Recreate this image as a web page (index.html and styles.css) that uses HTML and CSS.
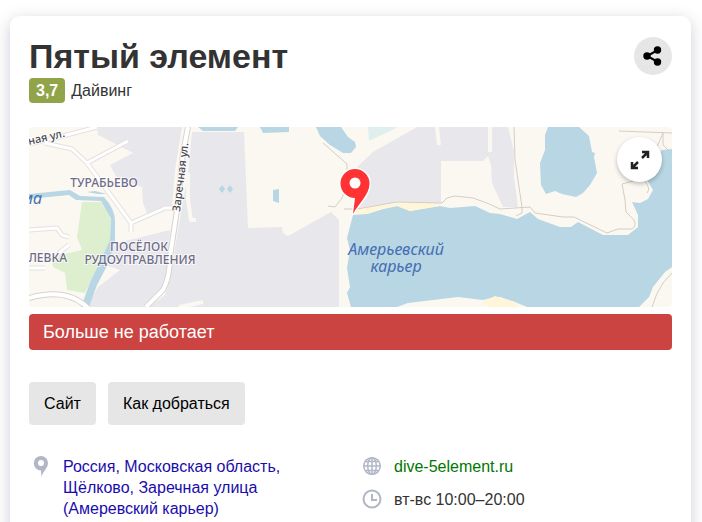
FILE: index.html
```html
<!DOCTYPE html>
<html lang="ru">

<head>
    <meta charset="UTF-8">
    <meta name="viewport" content="width=device-width, initial-scale=1.0">
    <title>Пятый элемент</title>
    <link rel="stylesheet" href="styles.css">
</head>

<body>

    <main class="card">
        <header class="card-header">
            <div>
                <h1 class="title">Пятый элемент</h1>
                <div class="subtitle">
                    <span class="rating">3,7</span>
                    <span>Дайвинг</span>
                </div>
            </div>
            <button type="button" class="share" aria-label="Поделиться">
                <svg width="20" height="20" viewBox="0 0 20 20">
                    <path d="M15 4L4 10l11 6" fill="none" stroke="#000" stroke-width="2" />
                    <circle cx="14.5" cy="4" r="3.7" />
                    <circle cx="4" cy="10" r="3.7" />
                    <circle cx="14.5" cy="16" r="3.7" />
                </svg>
            </button>
        </header>

        <div class="map">
            <svg class="map-view" viewBox="0 0 643 180" preserveAspectRatio="xMidYMid slice">
                <rect class="land" width="643" height="180" />

                <!-- built-up areas -->
                <g class="area">
                    <path d="M68 0H153L146 43L143 80L119 89L114 76L113 60L88 51L81 38L104 26L79 13L69 8Z" />
                    <path d="M88 116L141 103L138 156L118 180H58L69 160L91 143L71 136Z" />
                    <path d="M163 5H215L219 101L253 100L254 106L259 109L302 85L310 93V180H120L136 168L141 153L149 103L153 80L159 48Z" />
                    <path d="M388 0H479L485 24V50L489 80H474L463 56L462 38L459 29L454 34H412V76L368 75L324 82L328 40L344 25Z" />
                </g>
                <path class="gap" d="M408 0l2 18M461 0v25M159 46v27l3 20h5M150 180l24-5" />
                <path class="park" d="M53 75H72L78 85L82 93L81 116L71 136L56 166L38 163L36 146L24 140L22 130L53 123L48 110Z" />
                <path class="meadow" d="M339 0H369L340 14Z" />

                <!-- water -->
                <g class="water">
                    <path d="M0 67L41 63L51 69L75 70Q86 82 86 94L86 114L80 135L68 158L60 180H52L62 153L72 133L81 113L82 92L72 74L47 73L40 68L0 72ZM58 65l8-1 12 3-9 0z" />
                    <path d="M169 0H209L206 4H174ZM231 0H260V5L234 6Z" />
                    <path d="M287 0H312L319 10L326 15L327 20L322 26H314L301 18L291 9Z" />
                    <path d="M244 63L250 62V76L244 74ZM190 62l3-4 3 4-3 4zM198 62l3-4 3 4-3 4z" />
                    <path d="M519 0H550L560 9L563 25L566 26L565 30L568 46L561 58L554 66L547 70L533 67L526 64L517 67L512 58L511 36L516 23V8Z" />
                    <path d="M324 88L338 87L354 82L368 79L381 84L411 79L421 81L446 79L461 86L471 87L488 92L501 85L509 92L531 100H542L549 95L574 108H599L609 100V88L603 75L611 76L619 72L624 63L618 53L621 36L626 30L633 23L643 22V140L636 145L624 160L620 170L610 180H498L486 175L471 170L466 170L454 173L429 170L379 176L368 180H322L318 166L321 160L318 141L321 123L318 111Z" />
                </g>
                <path class="sand" d="M328 87L324 82L368 76H412L411 79L381 84L368 79L354 82L338 87ZM453 175L466 169L486 175L490 180H460Z" />

                <!-- paths and roads -->
                <path class="trail" d="M294 16L318 37V56L313 71L306 80L299 79M315 82H328L368 75L413 76L418 71L426 69L444 71L458 76L471 82L501 80L506 86L534 90H545L578 106L589 102H603Q608 98 605 93L597 85L596 73L593 57L608 53M485 0L486 33L493 80V86L487 89M590 4L643 6M634 6L628 20M634 6V18L640 24M616 54Q622 62 618 66M643 146L634 156Q627 166 623 180" />
                <path class="road-edge" d="M16 16L43 22L58 36L102 96V105M58 36L99 14M102 96L136 81H145M0 17L30 10L68 0M0 103L28 101L33 108L40 110M40 118L31 125L27 131M16 141H0" />
                <path class="road" d="M16 16L43 22L58 36L102 96V105M58 36L99 14M102 96L136 81H145M0 17L30 10L68 0M0 103L28 101L33 108L40 110M40 118L31 125L27 131M16 141H0" />
                <path class="road-edge wide" d="M159 0L154 26L148 83L141 130Q141 150 134 163L117 180M0 171Q38 160 59 181" />
                <path class="road wide" d="M159 0L154 26L148 83L141 130Q141 150 134 163L117 180M0 171Q38 160 59 181" />

                <g class="place">
                    <text x="75" y="60">ТУРАБЬЕВО</text>
                    <text x="110" y="124">ПОСЁЛОК</text>
                    <text x="111" y="137">РУДОУПРАВЛЕНИЯ</text>
                    <text x="38" y="135" class="end">ЛЕВКА</text>
                </g>
                <g class="street">
                    <text transform="translate(0 18) rotate(-13)">ная ул.</text>
                    <text transform="translate(151 85) rotate(-83)">Заречная ул.</text>
                </g>
                <g class="water-name">
                    <text x="367" y="128">Амерьевский</text>
                    <text x="367" y="145">карьер</text>
                    <text x="13" y="77" class="end">ма</text>
                </g>

                <path class="marker" d="M326 42a14.500 14.500 0 0 1 14.500 14.500C340.500 68 329 77 324 87L326 71A14.500 14.500 0 0 1 326 42Z" />
                <circle cx="326" cy="56" r="5.500" fill="#fff" />
            </svg>
            <button type="button" class="expand" aria-label="Развернуть карту">
                <svg width="20" height="20" viewBox="0 0 20 20">
                    <path d="M12 2h6v6M18 2l-6 6M2 12v6h6M2 18l6-6" fill="none" stroke="#222" stroke-width="2.5" />
                </svg>
            </button>
        </div>

        <p class="closed">Больше не работает</p>

        <div class="actions">
            <button type="button" class="action">Сайт</button>
            <button type="button" class="action">Как добраться</button>
        </div>

        <div class="contacts">
            <div class="contact">
                <span class="contact-icon">
                    <svg width="16" height="22" viewBox="0 0 16 22">
                        <path fill="#b2b7c8" fill-rule="evenodd" d="M8 0a7 7 0 0 1 7 7c0 5-5 8-6.500 14L8 14.500A7.200 7.200 0 0 1 8 0zm0 4a3 3 0 1 0 0 6 3 3 0 0 0 0-6z" />
                    </svg>
                </span>
                <a href="#" class="address">Россия, Московская область, Щёлково, Заречная улица (Амеревский карьер)</a>
            </div>
            <div class="contact-list">
                <div class="contact">
                    <span class="contact-icon">
                        <svg width="20" height="20" viewBox="0 0 20 20" fill="none" stroke="#b2b7c8" stroke-width="1.5">
                            <circle cx="10" cy="10" r="8.3" />
                            <ellipse cx="10" cy="10" rx="4.3" ry="8.3" />
                            <path d="M10 1.500v17M1.500 10h17M3.500 5.500h13M3.500 14.500h13" />
                        </svg>
                    </span>
                    <a href="#" class="site">dive-5element.ru</a>
                </div>
                <div class="contact">
                    <span class="contact-icon">
                        <svg width="20" height="20" viewBox="0 0 20 20" fill="none" stroke="#b2b7c8" stroke-width="2">
                            <circle cx="10" cy="10" r="8.5" />
                            <path d="M10 5v6h5" />
                        </svg>
                    </span>
                    <span>вт-вс 10:00–20:00</span>
                </div>
            </div>
        </div>
    </main>

</body>

</html>
```
FILE: styles.css
```css
body {
    margin: 0;
    padding: 16px 11px 0 10px;
    background-color: #fff;
    color: #333;
    font-family: "Liberation Sans", Arial, sans-serif;
    font-size: 16px;
    line-height: 21px;
}

button {
    padding: 0;
    border: none;
    color: #000;
    font: inherit;
    cursor: pointer;
}

a {
    text-decoration: none;
}

svg {
    display: block;
}

.card {
    padding: 20px 19px;
    border-radius: 10px;
    background-color: #fff;
    box-shadow: 0 4px 16px rgba(50, 60, 90, 0.25);
}

.card-header {
    display: flex;
    justify-content: space-between;
    align-items: flex-start;
}

.title {
    margin: 0 0 2px;
    font-size: 34px;
    line-height: 40px;
}

.subtitle {
    display: flex;
    gap: 6px;
    line-height: 25px;
}

.rating {
    padding: 0 7px;
    border-radius: 4px;
    background-color: #91a449;
    color: #fff;
    font-weight: bold;
}

.share,
.expand {
    display: flex;
    align-items: center;
    justify-content: center;
    border-radius: 50%;
}

.share {
    width: 38px;
    height: 38px;
    margin-top: 1px;
    background-color: #e6e6e6;
}

.map {
    position: relative;
    margin-top: 24px;
    border-radius: 4px;
    overflow: hidden;
}

.map-view {
    width: 100%;
    height: 180px;
}

.expand {
    position: absolute;
    top: 10px;
    right: 10px;
    width: 45px;
    height: 45px;
    background-color: #fff;
    box-shadow: 0 2px 4px rgba(0, 0, 0, 0.25);
}

.land {
    fill: #fbf8f1;
}

.area {
    fill: #e8e7ec;
}

.park {
    fill: #deefd0;
}

.meadow {
    fill: #dfefed;
}

.water {
    fill: #b8d6e3;
}

.sand {
    fill: #fff5d8;
}

.gap,
.trail,
.road,
.road-edge {
    fill: none;
    stroke-linejoin: round;
}

.gap {
    stroke: #fbf8f1;
    stroke-width: 4px;
}

.trail {
    stroke: #d5cdc3;
    stroke-width: 1px;
}

.road-edge {
    stroke: #e4e1df;
    stroke-width: 5px;
}

.road {
    stroke: #fff;
    stroke-width: 3px;
}

.road-edge.wide {
    stroke: #d6d3d2;
    stroke-width: 6px;
}

.road.wide {
    stroke-width: 4px;
}

.place,
.street,
.water-name {
    font-family: "Noto Sans", sans-serif;
    text-anchor: middle;
}

.place,
.street {
    font-size: 12px;
    font-weight: 500;
    paint-order: stroke;
    stroke: #fff;
    stroke-opacity: 0.7;
    stroke-width: 2px;
}

.place {
    fill: #6f6d88;
}

.street {
    fill: #4a484f;
    font-size: 11px;
    text-anchor: start;
}

.water-name {
    fill: #456eb3;
    font-size: 16px;
    font-style: italic;
}

.end {
    text-anchor: end;
}

.marker {
    fill: #ff3333;
    stroke: #fff;
    stroke-width: 3px;
    paint-order: stroke;
}

.closed {
    margin: 7px 0 32px;
    padding: 0 14px;
    border-radius: 4px;
    background-color: #cb4441;
    color: #fff;
    font-size: 18px;
    line-height: 36px;
}

.actions {
    display: flex;
    gap: 12px;
}

.action {
    padding: 11px 15px;
    border-radius: 4px;
    background-color: #e6e6e6;
}

.contacts {
    display: grid;
    grid-template-columns: 1fr 1fr;
    gap: 19px;
    margin-top: 31px;
}

.contact-list {
    display: flex;
    flex-direction: column;
    gap: 12px;
}

.contact {
    display: flex;
    gap: 10px;
}

.contact-icon {
    display: flex;
    flex: none;
    justify-content: center;
    width: 24px;
}

.address {
    padding-right: 24px;
    color: #1a0dab;
}

.site {
    color: #007700;
}
```
